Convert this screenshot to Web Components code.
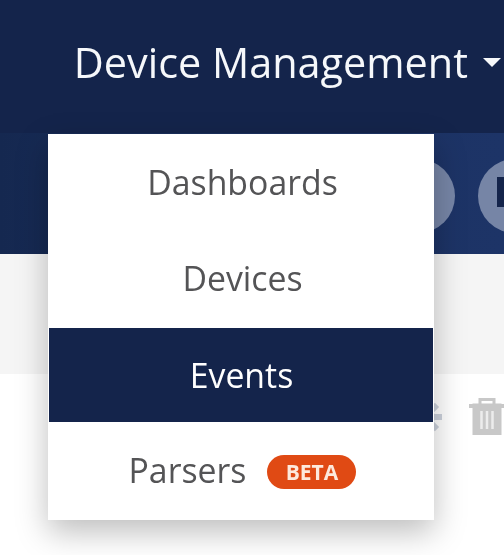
<!DOCTYPE html>
<html>
<head>
<meta charset="utf-8">
<style>
  html, body { margin: 0; height: 100%; background: #fff; overflow: hidden; }
  body { font-family: "Open Sans", "Liberation Sans", sans-serif; }
</style>
</head>
<body>
<app-page></app-page>
<script>
(function () {
  const blur = 'filter: blur(0.6px);';

  class TopBar extends HTMLElement {
    constructor() {
      super();
      this.attachShadow({mode: 'open'}).innerHTML = `
        <style>
          :host { display: flex; height: 133px; background: #14244b; color: #f6f8fb; justify-content: flex-end; box-sizing: border-box; padding: 35px 0 0 0; font-size: 41.400px; line-height: 54px; }
          .label { ${blur} white-space: nowrap; margin-right: 36px; position: relative; }
          .caret { position: absolute; left: 409px; top: 23px; width: 0; height: 0; border: 9px solid transparent; border-top-color: #f6f8fb; border-bottom: 0; }
        </style>
        <div class="label"><slot></slot><span class="caret"></span></div>`;
    }
  }

  class ToolBand extends HTMLElement {
    constructor() {
      super();
      this.attachShadow({mode: 'open'}).innerHTML = `
        <style>
          :host { display: flex; height: 121px; background: linear-gradient(90deg, #152850, #1c3263 60%, #1d3467); justify-content: flex-end; align-items: center; gap: 23px; padding: 4px 0 0 0; box-sizing: border-box; overflow: hidden; }
          .round { flex: none; width: 74px; height: 74px; border-radius: 50%; background: #7685a6; position: relative; ${blur} }
          .round.last { margin-right: -48px; }
          .round i { position: absolute; background: #14244b; }
          .a i { left: 16px; top: 33px; width: 6px; height: 16px; }
          .b i { left: 19px; top: 18px; width: 30px; height: 30px; }
        </style>
        <div class="round a"><i></i></div>
        <div class="round b last"><i></i></div>`;
    }
  }

  class GreyBand extends HTMLElement {
    constructor() {
      super();
      this.attachShadow({mode: 'open'}).innerHTML = `
        <style>:host { display: block; height: 120px; background: #f5f5f5; }</style>`;
    }
  }

  class RowIcons extends HTMLElement {
    constructor() {
      super();
      this.attachShadow({mode: 'open'}).innerHTML = `
        <style>
          :host { display: flex; justify-content: flex-end; gap: 24px; padding: 23px 0 0 0; height: 158px; overflow: hidden; background: #fff; }
          svg { flex: none; display: block; ${blur} }
          .trash { margin-right: -1px; }
        </style>
        <svg width="40" height="40" viewBox="0 0 40 40" fill="#ccd2dc">
          <circle cx="20" cy="20" r="10"/>
          <rect x="17" y="3" width="6" height="34"/>
          <rect x="3" y="17" width="34" height="6"/>
          <rect x="17" y="3" width="6" height="34" transform="rotate(45 20 20)"/>
          <rect x="17" y="3" width="6" height="34" transform="rotate(-45 20 20)"/>
        </svg>
        <svg class="trash" width="36" height="40" viewBox="0 0 36 40" fill="none" stroke="#c8c8c8">
          <path d="M0 9H36" stroke-width="4"/>
          <path d="M11 8V2.500H25V8" stroke-width="3"/>
          <path d="M5 8V36.500H31V8Z" fill="#c8c8c8" stroke-width="3"/>
          <path d="M12.500 14V32M18 14V32M23.500 14V32" stroke="#ececec" stroke-width="2.500"/>
        </svg>`;
    }
  }

  class DropMenu extends HTMLElement {
    constructor() {
      super();
      this.attachShadow({mode: 'open'}).innerHTML = `
        <style>
          :host { position: absolute; left: 48px; top: 134px; width: 386px; display: flex; flex-direction: column; background: #fff; box-shadow: 0 12px 30px rgba(0,0,0,.26); padding-bottom: 2px; }
        </style>
        <slot></slot>`;
    }
  }

  class MenuItem extends HTMLElement {
    constructor() {
      super();
      this.attachShadow({mode: 'open'}).innerHTML = `
        <style>
          :host { display: flex; height: 96px; align-items: center; justify-content: center; gap: 21px; color: #545456; font-size: 33.800px; box-sizing: border-box; padding-left: 3px; }
          :host([active]) { background: #14244b; color: #fff; height: 94px; margin: 2px 1px 0 1px; padding-left: 1px; }
          .txt { ${blur} }
          ::slotted(beta-tag) { margin-top: 4px; }
        </style>
        <span class="txt"><slot></slot></span>
        <slot name="tag"></slot>`;
    }
  }

  class BetaTag extends HTMLElement {
    constructor() {
      super();
      this.attachShadow({mode: 'open'}).innerHTML = `
        <style>
          :host { display: inline-flex; align-items: center; justify-content: center; width: 89px; height: 34px; border-radius: 17px; background: #e04a14; color: #fde9dc; font-size: 21px; font-weight: 700; ${blur} }
        </style>
        <slot></slot>`;
    }
  }

  class AppPage extends HTMLElement {
    constructor() {
      super();
      this.attachShadow({mode: 'open'}).innerHTML = `
        <style>
          :host { display: block; position: relative; width: 504px; height: 555px; overflow: hidden; }
        </style>
        <top-bar>Device Management</top-bar>
        <tool-band></tool-band>
        <grey-band></grey-band>
        <row-icons></row-icons>
        <drop-menu>
          <menu-item>Dashboards</menu-item>
          <menu-item>Devices</menu-item>
          <menu-item active>Events</menu-item>
          <menu-item>Parsers<beta-tag slot="tag">BETA</beta-tag></menu-item>
        </drop-menu>`;
    }
  }

  customElements.define('top-bar', TopBar);
  customElements.define('tool-band', ToolBand);
  customElements.define('grey-band', GreyBand);
  customElements.define('row-icons', RowIcons);
  customElements.define('drop-menu', DropMenu);
  customElements.define('menu-item', MenuItem);
  customElements.define('beta-tag', BetaTag);
  customElements.define('app-page', AppPage);
})();
</script>
</body>
</html>
